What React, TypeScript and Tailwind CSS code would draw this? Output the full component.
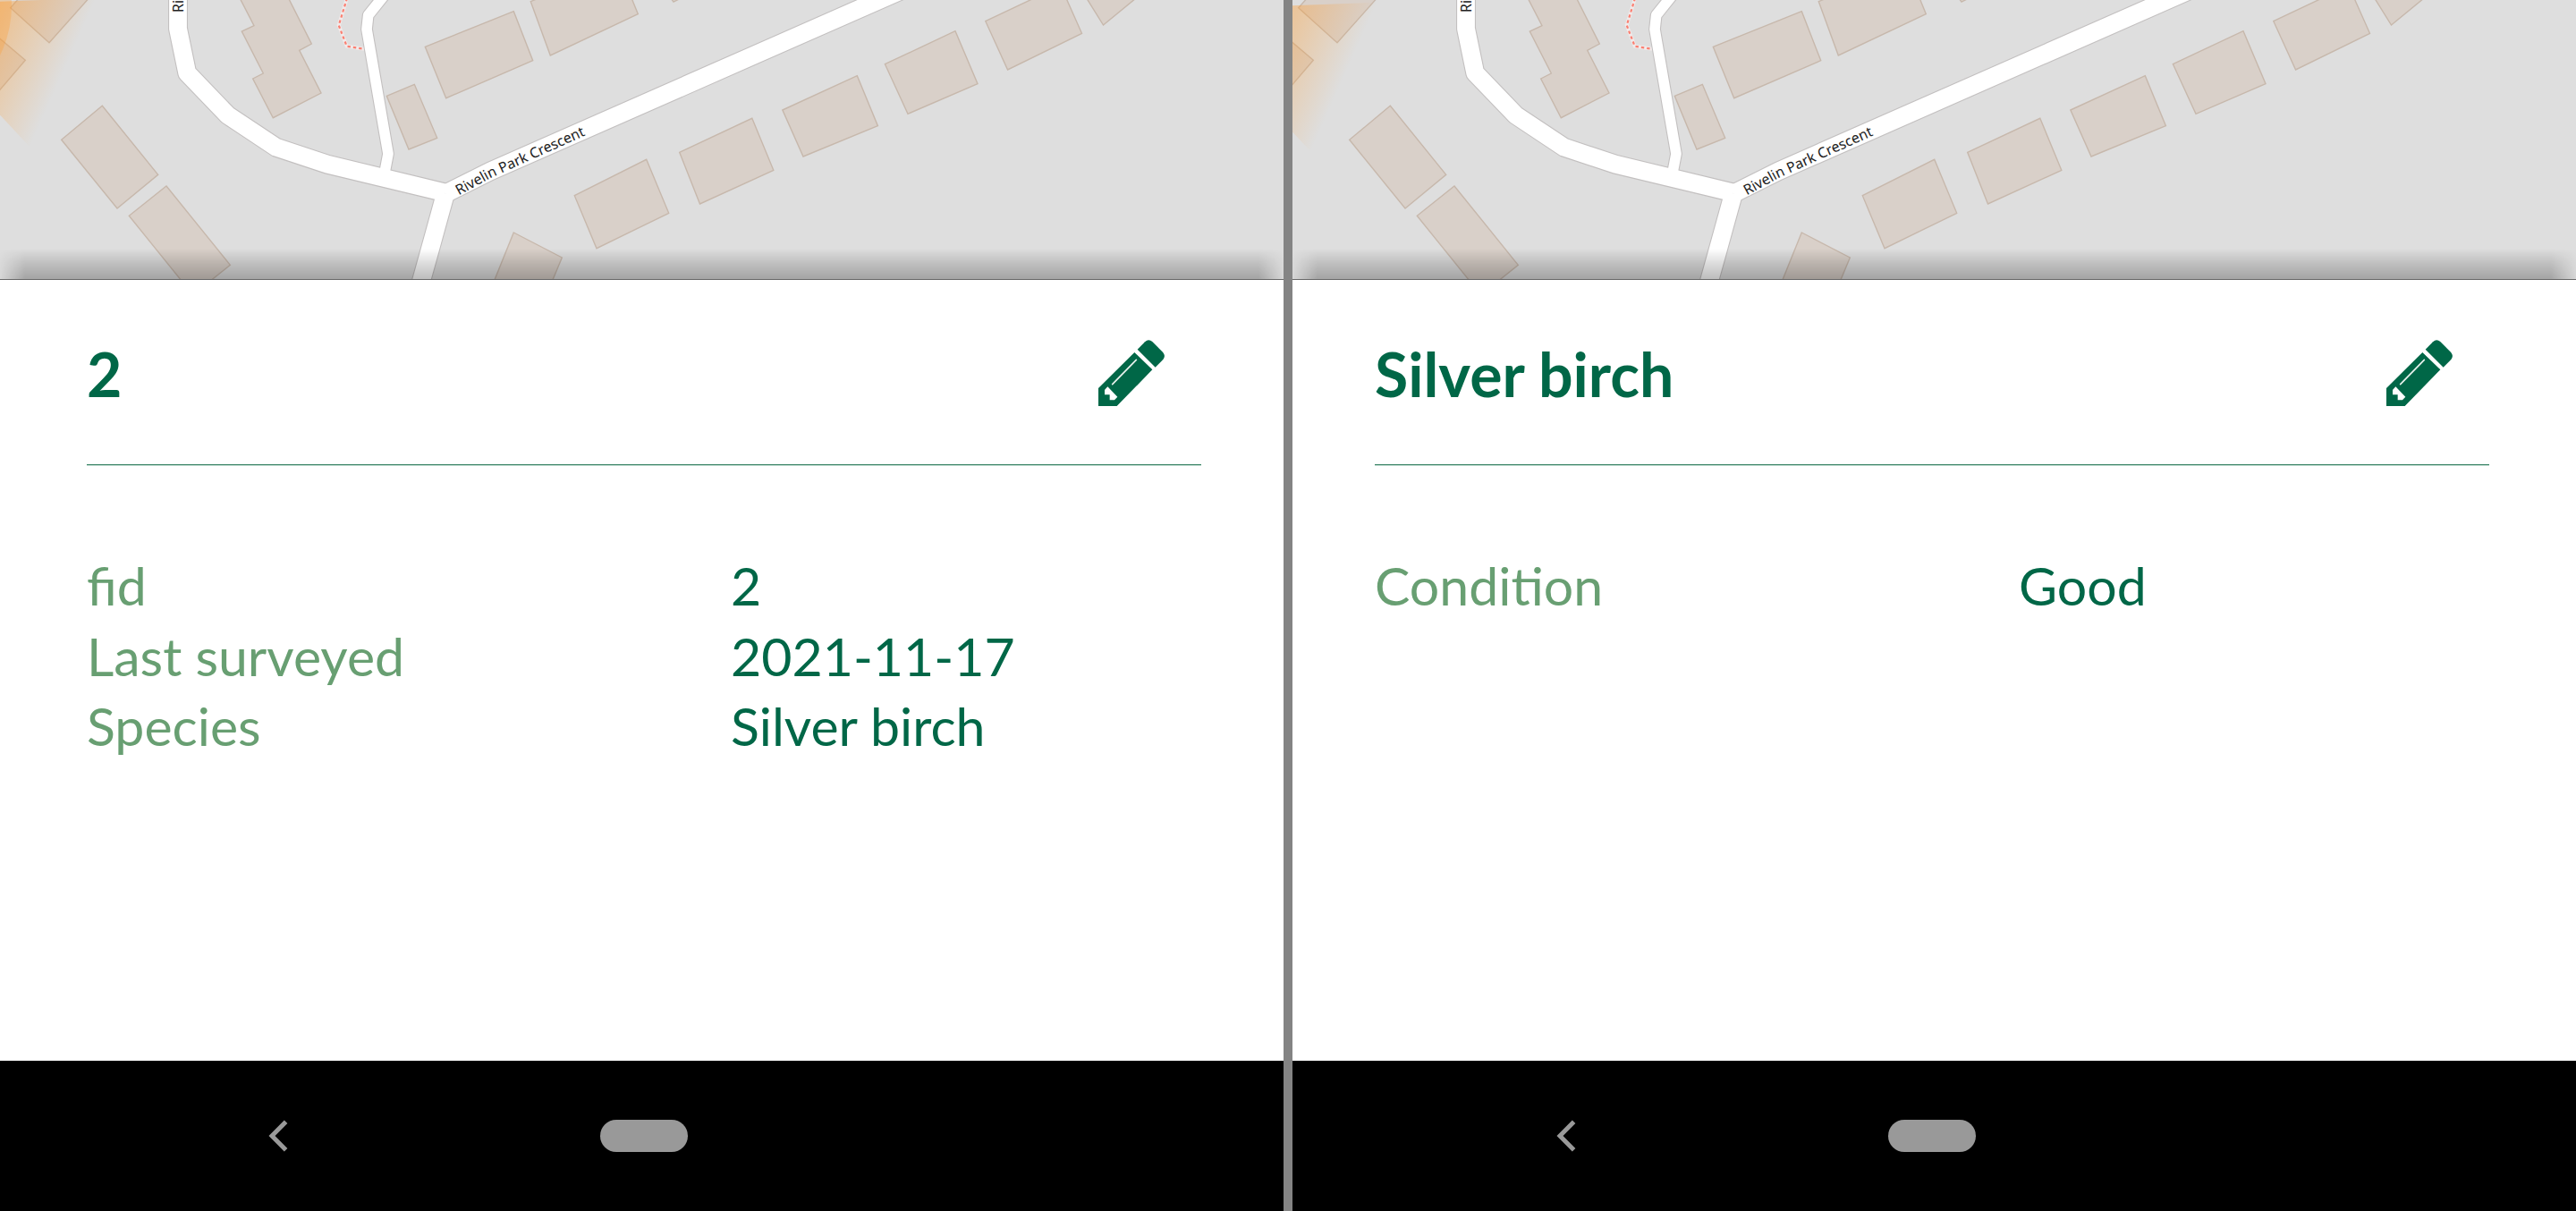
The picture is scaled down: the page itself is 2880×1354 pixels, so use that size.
const LATO = "font-['Lato','Carlito',sans-serif]";

type Field = { label: string; value: string };

const BUILDINGS = [
  "114.3,118.3 176.7,195.3 131,233 68.7,156.3",
  "186,208 257.3,296.3 215.7,329.7 144.3,241.3",
  "11.7,8.7 55,47.7 102,-5 24,-5",
  "-10,34.7 0,43.3 28.3,67.3 0,100.3 -10,112",
  "268.3,-1.7 284,28.7 270.3,35 294.3,82 282.7,88 305.3,131.7 359,104 334.7,56.3 348.3,49 322.7,-1.7",
  "432.3,107.3 463.3,94.3 488.7,154.3 457,167",
  "475.3,52.3 574.3,12.7 595.7,67.7 498.7,109.7",
  "593.3,1.7 615.3,62 713.3,15.7 705.3,-4 607,-4",
  "749.3,-3 753,2.2 763,-3",
  "642.3,218.7 722.7,178.3 747.7,238.3 667,277.7",
  "759.7,170.3 840.8,132.3 864.8,190.3 782.5,228",
  "874.9,123 958.3,84.7 981.4,140.7 898,175",
  "989.4,71.7 1068,34.7 1093,93.7 1015,127.3",
  "1101.8,23.7 1156,-2 1192,-2 1209.5,37.3 1126.6,78",
  "1214.8,-2 1233.5,28 1270,-2",
  "574.3,260 628.3,288 618.3,312 604,345 540,345",
];

const MAIN_ROAD = "M199 -10V32L209.3 81.7L254.5 128.7L308.7 164.7L366 183.7L498 215.5";
const CRESCENT = "M498 216.5L548 191.5L840 63L1006 -10";
const SOUTH_ROAD = "M498 216.5L480.5 280L468 325";
const SIDE_ROAD = "M431 -7L411.7 17L410 32.7L434 172L430 193";

type Heading = { x: number; y: number; dot: boolean };

function StreetMap({ id, originX, heading }: { id: string; originX: number; heading: Heading }) {
  return (
    <svg className="block h-full w-full" viewBox={`${originX} 0 1435 312`}>
      <defs>
        <linearGradient
          id={`${id}-beam`}
          gradientUnits="userSpaceOnUse"
          x1={heading.x}
          y1={heading.y}
          x2={heading.x + 182}
          y2={heading.y + 81}
        >
          <stop offset="0" stopColor="#ff9d30" stopOpacity="0.95" />
          <stop offset="1" stopColor="#ff9d30" stopOpacity="0" />
        </linearGradient>
        <path id={`${id}-street`} d="M513 218.5L548 199.3L600 175.8L700 131" />
      </defs>
      <rect x="0" y="0" width="1440" height="312" fill="#dedede" />
      <g fill="#d9d0c9" stroke="#c7b8ac" strokeWidth="1.4">
        {BUILDINGS.map((points) => (
          <polygon key={points} points={points} />
        ))}
      </g>
      <path d="M388 -2L378.7 28.3L387.7 51.7L407 54.7" fill="none" stroke="#f1eaea" strokeWidth="4" />
      <path d="M388 -2L378.7 28.3L387.7 51.7L407 54.7" fill="none" stroke="#fa8072" strokeWidth="2.2" strokeDasharray="3.4 3" />
      <g fill="none" stroke="#c3c0c0" strokeLinejoin="round">
        <path d={SIDE_ROAD} strokeWidth="13.8" />
        <path d={MAIN_ROAD} strokeWidth="22" />
        <path d={CRESCENT} strokeWidth="22" />
        <path d={SOUTH_ROAD} strokeWidth="22" />
      </g>
      <g fill="none" stroke="#ffffff" strokeLinejoin="round">
        <path d={SIDE_ROAD} strokeWidth="11.6" />
        <path d={MAIN_ROAD} strokeWidth="19.8" />
        <path d={CRESCENT} strokeWidth="19.8" />
        <path d={SOUTH_ROAD} strokeWidth="19.8" />
      </g>
      <g className="font-['Noto_Sans',sans-serif]" fontSize="16" fill="#222" stroke="#fff" strokeWidth="2.5" strokeLinejoin="round" paintOrder="stroke">
        <text textLength="157" lengthAdjust="spacing">
          <textPath href={`#${id}-street`}>Rivelin Park Crescent</textPath>
        </text>
        <text transform="translate(204.5 14) rotate(-90)">Ri</text>
      </g>
      <polygon
        points={`${heading.x},${heading.y} ${heading.x + 240},${heading.y - 9} ${heading.x + 240},${heading.y + 258}`}
        fill={`url(#${id}-beam)`}
      />
      {heading.dot && <circle cx={heading.x} cy={heading.y} r="127" fill="#ff9a2b" fillOpacity="0.28" />}
    </svg>
  );
}

function Pencil() {
  return (
    <svg className="h-[74px] w-[74px] shrink-0" viewBox="0 0 222 222" fill="#006747">
      <path d="M131 32L156 7Q168 -5 181 6L216 41Q227 54 217 66L191 92Z" />
      <path
        fillRule="evenodd"
        d="M121 42L181 100L62 222H0V162ZM31 157L21 168V184H38V202H54L64 191Z"
      />
      <path d="M47 149L127 67" stroke="#e9f3ee" strokeWidth="5" strokeLinecap="round" />
    </svg>
  );
}

function NavigationBar() {
  return (
    <nav className="flex h-[168px] items-center bg-black pl-[300px]">
      <svg className="h-[36px] w-[22px]" viewBox="0 0 22 36" fill="none" stroke="#999999" strokeWidth="5">
        <path d="M19.6 2.2L4 18L19.6 33.8" />
      </svg>
      <div className="ml-[349px] h-[36px] w-[98px] rounded-full bg-[#999999]" />
    </nav>
  );
}

function Phone({
  id,
  title,
  fields,
  inset,
  heading,
}: {
  id: string;
  title: string;
  fields: Field[];
  inset: number;
  heading: Heading;
}) {
  return (
    <section className="flex h-full w-[1435px] flex-col overflow-hidden bg-white">
      <div className="relative h-[312px] shrink-0">
        <StreetMap id={id} originX={inset} heading={heading} />
        <div className="absolute inset-x-0 bottom-0 h-[34px] bg-[linear-gradient(to_top,rgba(0,0,0,0.26),rgba(0,0,0,0.14)_50%,transparent)] mask-[linear-gradient(to_right,rgba(0,0,0,0.12),black_28px,black_calc(100%-28px),rgba(0,0,0,0.12))]" />
      </div>
      <div className="h-px shrink-0 bg-[#686868]" />
      <div className="flex-1" style={{ marginLeft: -inset }}>
        <main className="ml-[97px] w-[1246px]">
          <header className="flex h-[206px] items-center justify-between pt-px pr-[41px]">
            <h1 className={`${LATO} pt-[2px] text-[68px] leading-[83px] font-bold text-[#006747]`}>{title}</h1>
            <Pencil />
          </header>
          <div className="h-[2px] border-b border-[#bcd9cd] bg-[#3d8568]" />
          <dl className={`${LATO} pt-[95px] text-[59px] leading-[78.5px]`}>
            {fields.map((field) => (
              <div key={field.label} className="grid grid-cols-[720px_1fr]">
                <dt className="text-[#689f72]">{field.label}</dt>
                <dd className="text-[#006747]">{field.value}</dd>
              </div>
            ))}
          </dl>
        </main>
      </div>
      <div style={{ marginLeft: -inset }}>
        <NavigationBar />
      </div>
    </section>
  );
}

export default function App() {
  return (
    <div className="flex h-[1354px] w-[2880px] overflow-hidden bg-[#848484]">
      <Phone
        id="left"
        title="2"
        inset={0}
        heading={{ x: -114, y: 6, dot: true }}
        fields={[
          { label: "fid", value: "2" },
          { label: "Last surveyed", value: "2021-11-17" },
          { label: "Species", value: "Silver birch" },
        ]}
      />
      <div className="w-[10px] shrink-0" />
      <Phone
        id="right"
        title="Silver birch"
        inset={5}
        heading={{ x: -122, y: 11, dot: false }}
        fields={[{ label: "Condition", value: "Good" }]}
      />
    </div>
  );
}
